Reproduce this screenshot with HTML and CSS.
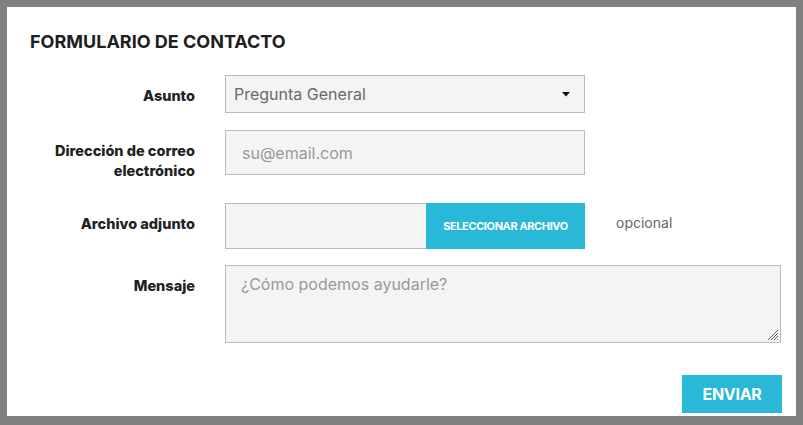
FILE: index.html
```html
<!DOCTYPE html>
<html lang="es">
<head>
<meta charset="utf-8">
<link rel="stylesheet" href="styles.css">
</head>
<body>
<div class="card">
  <h1 class="title">FORMULARIO DE CONTACTO</h1>
  <form class="form">
    <div class="row row-select">
      <label class="label">Asunto</label>
      <div class="select">
        <span>Pregunta General</span>
        <svg class="arrow" width="8" height="5" viewBox="0 0 8 5"><path d="M0 0H8L4 4.5Z" fill="#111"/></svg>
      </div>
    </div>
    <div class="row row-email">
      <label class="label">Dirección de correo<br>electrónico</label>
      <input class="input email" type="text" placeholder="su@email.com">
    </div>
    <div class="row row-file">
      <label class="label">Archivo adjunto</label>
      <div class="file">
        <div class="file-name"></div>
        <div class="file-btn">SELECCIONAR ARCHIVO</div>
      </div>
      <span class="optional">opcional</span>
    </div>
    <div class="row row-msg">
      <label class="label">Mensaje</label>
      <div class="message-wrap">
        <textarea class="input message" placeholder="¿Cómo podemos ayudarle?"></textarea>
        <svg class="grip" width="12" height="12" viewBox="0 0 12 12">
          <path d="M11 1L1 11M11 4L4 11M11 7L7 11M11 10L10 11" stroke="#666" stroke-width="1" fill="none"/>
        </svg>
      </div>
    </div>
    <div class="actions">
      <button type="button" class="send">ENVIAR</button>
    </div>
  </form>
</div>
</body>
</html>
```
FILE: styles.css
```css
html, body {
  margin: 0;
}
body {
  background: #808080;
  padding: 7px 7px 9px 7px;
  height: 425px;
  box-sizing: border-box;
  font-family: Inter, "Noto Sans", sans-serif;
  color: #222;
}
.card {
  background: #fff;
  height: 409px;
  box-sizing: border-box;
  padding: 24px 14px 0 23px;
}
.title {
  margin: 0 0 22px 0;
  font-size: 18px;
  line-height: 22px;
  font-weight: 700;
  color: #1e1e1e;
}
.form {
  display: flex;
  flex-direction: column;
}
.row {
  display: flex;
  align-items: flex-start;
  gap: 30px;
}
.label {
  width: 165px;
  flex: none;
  text-align: right;
  font-size: 14.5px;
  line-height: 20px;
  font-weight: 800;
  padding-top: 11px;
  color: #222;
}
.select {
  width: 360px;
  height: 38px;
  box-sizing: border-box;
  border: 1px solid #bbb;
  background: #f4f4f4;
  display: flex;
  align-items: center;
  justify-content: space-between;
  padding: 0 14px 0 8px;
  font-size: 16px;
  color: #6a6a6a;
}
.arrow {
  display: block;
}
.row-email {
  margin-top: 17px;
}
.input {
  box-sizing: border-box;
  border: 1px solid #bbb;
  background: #f4f4f4;
  font-family: Inter, "Noto Sans", sans-serif;
  font-size: 16px;
  color: #444;
  outline: none;
  margin: 0;
}
.input::placeholder {
  color: #999;
}
.email {
  width: 360px;
  height: 45px;
  padding: 0 16px;
}
.row-file {
  margin-top: 22px;
}
.file {
  display: flex;
  width: 360px;
  height: 46px;
  flex: none;
}
.file-name {
  width: 201px;
  box-sizing: border-box;
  border: 1px solid #bbb;
  border-right: none;
  background: #f4f4f4;
}
.file-btn {
  flex: 1;
  background: #29b8d8;
  color: #fff;
  font-size: 11px;
  font-weight: 700;
  letter-spacing: -0.4px;
  display: flex;
  align-items: center;
  justify-content: center;
}
.optional {
  margin-left: 1px;
  padding-top: 10px;
  font-size: 14px;
  line-height: 20px;
  color: #666;
}
.row-msg {
  margin-top: 16px;
}
.message-wrap {
  position: relative;
  width: 556px;
  height: 78px;
}
.message {
  display: block;
  width: 556px;
  height: 78px;
  padding: 7px 15px;
  resize: none;
  line-height: 22px;
}
.grip {
  position: absolute;
  right: 2px;
  bottom: 2px;
  display: block;
}
.actions {
  display: flex;
  justify-content: flex-end;
  margin-top: 32px;
}
.send {
  width: 100px;
  height: 38px;
  border: none;
  background: #29b8d8;
  color: #fff;
  font-family: Inter, "Noto Sans", sans-serif;
  font-size: 16px;
  font-weight: 700;
  letter-spacing: -0.3px;
  padding: 0;
}
```
